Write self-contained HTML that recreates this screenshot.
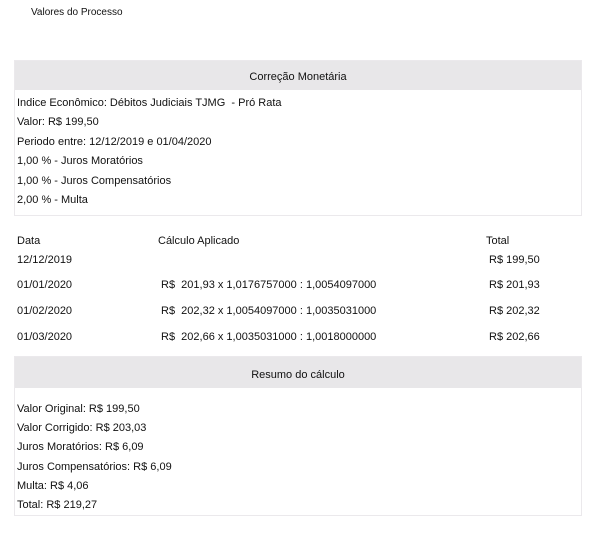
<!DOCTYPE html>
<html><head><meta charset="utf-8"><style>
body{margin:0;width:607px;height:554px;background:#fff;font-family:"Liberation Sans",sans-serif;font-size:11px;color:#111;position:relative;overflow:hidden}
.t{position:absolute;white-space:pre;line-height:13px;margin-top:1px}
.box{position:absolute;left:14px;width:566px;border:1px solid #ebe9ec;background:#fff}
.hd{position:absolute;left:0;right:0;top:0;background:#e8e7e9;text-align:center}
</style></head><body>
<div class="t" style="left:31px;top:5px;font-size:10px">Valores do Processo</div>

<div class="box" style="top:60px;height:154px"><div class="hd" style="height:29px;line-height:32px">Correção Monetária</div></div>
<div class="t" style="left:17px;top:96px">Indice Econômico: Débitos Judiciais TJMG  - Pró Rata</div>
<div class="t" style="left:17px;top:115px">Valor: R$ 199,50</div>
<div class="t" style="left:17px;top:135px">Periodo entre: 12/12/2019 e 01/04/2020</div>
<div class="t" style="left:17px;top:154px">1,00 % - Juros Moratórios</div>
<div class="t" style="left:17px;top:174px">1,00 % - Juros Compensatórios</div>
<div class="t" style="left:17px;top:193px">2,00 % - Multa</div>

<div class="t" style="left:17px;top:234px">Data</div>
<div class="t" style="left:158px;top:234px">Cálculo Aplicado</div>
<div class="t" style="left:486px;top:234px">Total</div>
<div class="t" style="left:17px;top:253px">12/12/2019</div>
<div class="t" style="left:489px;top:253px">R$ 199,50</div>
<div class="t" style="left:17px;top:278px">01/01/2020</div>
<div class="t" style="left:161px;top:278px">R$  201,93 x 1,0176757000 : 1,0054097000</div>
<div class="t" style="left:489px;top:278px">R$ 201,93</div>
<div class="t" style="left:17px;top:304px">01/02/2020</div>
<div class="t" style="left:161px;top:304px">R$  202,32 x 1,0054097000 : 1,0035031000</div>
<div class="t" style="left:489px;top:304px">R$ 202,32</div>
<div class="t" style="left:17px;top:330px">01/03/2020</div>
<div class="t" style="left:161px;top:330px">R$  202,66 x 1,0035031000 : 1,0018000000</div>
<div class="t" style="left:489px;top:330px">R$ 202,66</div>

<div class="box" style="top:356px;height:158px"><div class="hd" style="height:31px;line-height:36px">Resumo do cálculo</div></div>
<div class="t" style="left:17px;top:402px">Valor Original: R$ 199,50</div>
<div class="t" style="left:17px;top:421px">Valor Corrigido: R$ 203,03</div>
<div class="t" style="left:17px;top:440px">Juros Moratórios: R$ 6,09</div>
<div class="t" style="left:17px;top:460px">Juros Compensatórios: R$ 6,09</div>
<div class="t" style="left:17px;top:479px">Multa: R$ 4,06</div>
<div class="t" style="left:17px;top:498px">Total: R$ 219,27</div>
</body></html>
